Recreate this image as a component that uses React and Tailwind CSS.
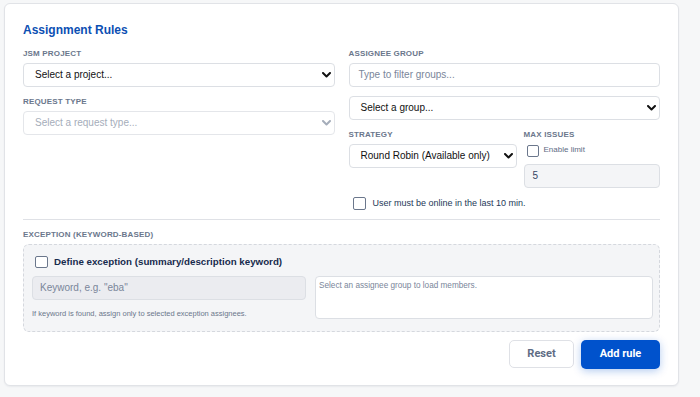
import React from "react";

const F = { fontFamily: '"Liberation Sans", Arial, sans-serif' };

function Chevron({ color = "#111" }) {
  return (
    <svg width="9" height="6" viewBox="0 0 9 6" className="shrink-0">
      <path d="M1 1 L4.5 4.5 L8 1" fill="none" stroke={color} strokeWidth="2" strokeLinecap="round" strokeLinejoin="round" />
    </svg>
  );
}

function Label({ children, className = "" }) {
  return (
    <div className={`h-[10px] text-[8px] leading-[10px] font-bold uppercase tracking-[0.02em] text-[#6b778c] ${className}`}>
      {children}
    </div>
  );
}

function Select({ text, disabled = false }) {
  return (
    <div
      className={`h-[24px] rounded-[4px] border bg-white flex items-center justify-between pl-[11px] pr-[3px] ${
        disabled ? "border-[#e4e6ea]" : "border-[#dcdfe4]"
      }`}
    >
      <span className={`text-[10px] leading-[12px] ${disabled ? "text-[#a5adba]" : "text-[#111]"}`}>{text}</span>
      <Chevron color={disabled ? "#a5adba" : "#111"} />
    </div>
  );
}

function Box({ className = "" }) {
  return <span className={`block w-[12px] h-[12px] rounded-[2px] border border-[#6b778c] bg-white shrink-0 ${className}`} />;
}

export default function App() {
  return (
    <div style={F} className="w-[700px] h-[397px] bg-[#f6f7f8] pt-[3px] pl-[4px]">
      <div className="w-[675px] bg-white border border-[#e1e3e7] rounded-[6px] px-[18px] pt-[19px] pb-[16px] shadow-[0_1px_2px_rgba(9,30,66,0.06)]">
        <div className="text-[12px] leading-[14px] font-bold text-[#0c4fb3]">Assignment Rules</div>

        <div className="mt-[12px] grid grid-cols-2 gap-x-[14px] items-start">
          {/* left */}
          <div className="flex flex-col">
            <Label className="mb-[4px]">JSM Project</Label>
            <Select text="Select a project..." />
            <Label className="mt-[10px] mb-[4px]">Request Type</Label>
            <Select text="Select a request type..." disabled />
          </div>

          {/* right */}
          <div className="flex flex-col">
            <Label className="mb-[4px]">Assignee Group</Label>
            <div className="h-[24px] rounded-[4px] border border-[#dcdfe4] bg-white flex items-center pl-[9px]">
              <span className="text-[10px] leading-[12px] text-[#7a869a]">Type to filter groups...</span>
            </div>
            <div className="mt-[9px]">
              <Select text="Select a group..." />
            </div>

            <div className="mt-[10px] grid grid-cols-[168px_1fr] gap-x-[7px] items-start">
              <div className="flex flex-col">
                <Label className="mb-[4px]">Strategy</Label>
                <Select text="Round Robin (Available only)" />
              </div>
              <div className="flex flex-col">
                <Label className="mb-[4px]">Max Issues</Label>
                <div className="h-[14px] flex items-center pl-[3px] gap-[5px]">
                  <Box />
                  <span className="text-[8px] leading-[10px] text-[#5e6c84] -mt-[3px]">Enable limit</span>
                </div>
                <div className="mt-[6px] h-[24px] rounded-[4px] border border-[#dcdfe4] bg-[#f4f5f7] flex items-center pl-[8px]">
                  <span className="text-[10px] leading-[12px] text-[#344563]">5</span>
                </div>
              </div>
            </div>

            <div className="mt-[9px] h-[13px] flex items-center pl-[4px] gap-[7px]">
              <Box className="w-[13px] h-[13px]" />
              <span className="text-[9px] leading-[11px] text-[#253858]">User must be online in the last 10 min.</span>
            </div>
          </div>
        </div>

        <div className="mt-[9px] h-px bg-[#dfe1e6]" />

        <Label className="mt-[10px] mb-[4px] tracking-[0.01em]">Exception (keyword-based)</Label>

        <div className="rounded-[6px] border border-dashed border-[#d5d8de] bg-[#f4f5f7] pl-[8px] pr-[6px] pt-[11px] pb-[12px]">
          <div className="h-[12px] flex items-center gap-[6px] pl-[3px]">
            <Box className="w-[13px]" />
            <span className="text-[9.75px] leading-[12px] font-bold text-[#172b4d]">
              Define exception (summary/description keyword)
            </span>
          </div>
          <div className="mt-[8px] grid grid-cols-[274px_1fr] gap-x-[9px] items-start">
            <div className="flex flex-col">
              <div className="h-[24px] rounded-[4px] border border-[#dcdfe4] bg-[#ebecf0] flex items-center pl-[7px]">
                <span className="text-[10px] leading-[12px] text-[#7a869a]">Keyword, e.g. "eba"</span>
              </div>
              <div className="mt-[9px] text-[7.5px] leading-[9px] text-[#6b778c]">
                If keyword is found, assign only to selected exception assignees.
              </div>
            </div>
            <div className="h-[43px] rounded-[4px] border border-[#dcdfe4] bg-white pl-[3px] pt-[4px]">
              <div className="text-[8.2px] leading-[10px] text-[#7a869a]">Select an assignee group to load members.</div>
            </div>
          </div>
        </div>

        <div className="mt-[8px] flex justify-end gap-[7px]">
          <button
            style={{ fontFamily: "Roboto, sans-serif" }}
            className="w-[65px] h-[28px] rounded-[5px] border border-[#dfe1e6] bg-white text-[11px] font-bold text-[#5e6c84]"
          >
            Reset
          </button>
          <button
            style={{ fontFamily: "Roboto, sans-serif" }}
            className="w-[79px] h-[29px] rounded-[5px] bg-[#0052cc] text-[11px] font-bold text-white shadow-[0_2px_8px_rgba(0,82,204,0.3)]"
          >
            Add rule
          </button>
        </div>
      </div>
    </div>
  );
}
